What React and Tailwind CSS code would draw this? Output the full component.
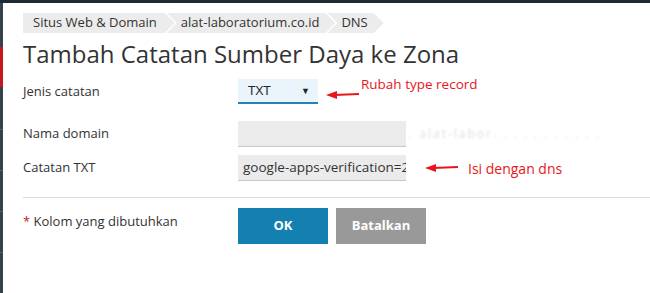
import React from "react";

const font = { fontFamily: '"Open Sans", "Noto Sans", sans-serif' };

function Crumb({ first, children }) {
  const clip = first
    ? "[clip-path:polygon(0_0,calc(100%-10px)_0,100%_50%,calc(100%-10px)_100%,0_100%)]"
    : "[clip-path:polygon(0_0,calc(100%-10px)_0,100%_50%,calc(100%-10px)_100%,0_100%,10px_50%)]";
  return (
    <div
      className={`h-[20px] flex items-center bg-[#ececec] text-[13px] text-[#333] ${clip} ${
        first ? "pl-[10px] pr-[18px]" : "-ml-[8px] pl-[14px] pr-[16px]"
      }`}
    >
      {children}
    </div>
  );
}

function Arrow({ className }) {
  return (
    <svg className={className} width="34" height="10" viewBox="0 0 34 10">
      <line x1="8" y1="5" x2="33" y2="4" stroke="#e8161b" strokeWidth="2.2" />
      <polygon points="0,5 11,1 11,9" fill="#e8161b" />
    </svg>
  );
}

export default function App() {
  return (
    <div className="relative w-[650px] h-[293px] bg-white overflow-hidden flex flex-col" style={font}>
      <div className="h-[3px] bg-[#1d2a32] shrink-0" />
      <div className="flex flex-1">
        <div className="w-[3px] flex flex-col shrink-0 bg-[#33434c]">
          <div className="h-[44px]" />
          <div className="h-[40px] bg-[#c8161d]" />
          <div className="h-[42px]" />
          <div className="h-[1px] bg-[#52626b]" />
          <div className="h-[40px]" />
          <div className="h-[1px] bg-[#52626b]" />
          <div className="h-[40px]" />
          <div className="h-[1px] bg-[#52626b]" />
          <div className="h-[40px]" />
          <div className="h-[1px] bg-[#52626b]" />
        </div>
        <div className="flex-1 pl-[20px] pt-[10px] flex flex-col">
          <div className="flex">
            <Crumb first>Situs Web &amp; Domain</Crumb>
            <Crumb>alat-laboratorium.co.id</Crumb>
            <Crumb>DNS</Crumb>
          </div>
          <h1 className="mt-[5px] h-[32px] leading-[32px] text-[24px] text-[#333] font-normal">
            Tambah Catatan Sumber Daya ke Zona
          </h1>

          <div className="mt-[9px] flex items-center h-[25px]">
            <div className="w-[215px] text-[13px] text-[#333]">Jenis catatan</div>
            <div className="w-[80px] h-[25px] bg-[#eaf4fb] border-b-2 border-[#2783b6] flex items-center justify-between pl-[10px] pr-[8px] text-[13.5px] text-[#222]">
              <span>TXT</span>
              <span className="text-[9px]">▼</span>
            </div>
            <Arrow className="ml-[8px] mt-[7px]" />
            <span className="ml-[1px] -mt-[14px] text-[13.5px] text-[#e8161b]">Rubah type record</span>
          </div>

          <div className="mt-[17px] flex items-center h-[26px]">
            <div className="w-[215px] text-[13px] text-[#333]">Nama domain</div>
            <div className="w-[168px] h-[26px] bg-[#ebebeb] border-b border-[#c2c8cb]" />
            <span className="ml-[3px] text-[12px] text-[#777] opacity-25 blur-[1px] tracking-[2px]">
              . alat-labor. . . . . . . . . . .
            </span>
          </div>

          <div className="mt-[8px] flex items-center h-[26px]">
            <div className="w-[215px] text-[13px] text-[#333]">Catatan TXT</div>
            <div className="w-[168px] h-[26px] bg-[#ebebeb] border-b border-[#c2c8cb] flex items-center pl-[5px] overflow-hidden whitespace-nowrap text-[13.5px] text-[#333]">
              google-apps-verification=2
            </div>
            <Arrow className="ml-[19px]" />
            <span className="ml-[9px] text-[14px] text-[#e8161b]">Isi dengan dns</span>
          </div>

          <div className="mt-[16px] h-[1px] bg-[#dcdcdc]" />

          <div className="mt-[10px] flex">
            <div className="w-[215px] text-[13px] text-[#333] pt-[4px]">
              <span className="text-[#c8161d]">*</span> Kolom yang dibutuhkan
            </div>
            <button className="w-[90px] h-[36px] bg-[#1380b1] text-white text-[13px] font-bold">OK</button>
            <button className="ml-[8px] w-[90px] h-[36px] bg-[#999999] text-white text-[13px] font-bold">
              Batalkan
            </button>
          </div>
        </div>
      </div>
    </div>
  );
}
